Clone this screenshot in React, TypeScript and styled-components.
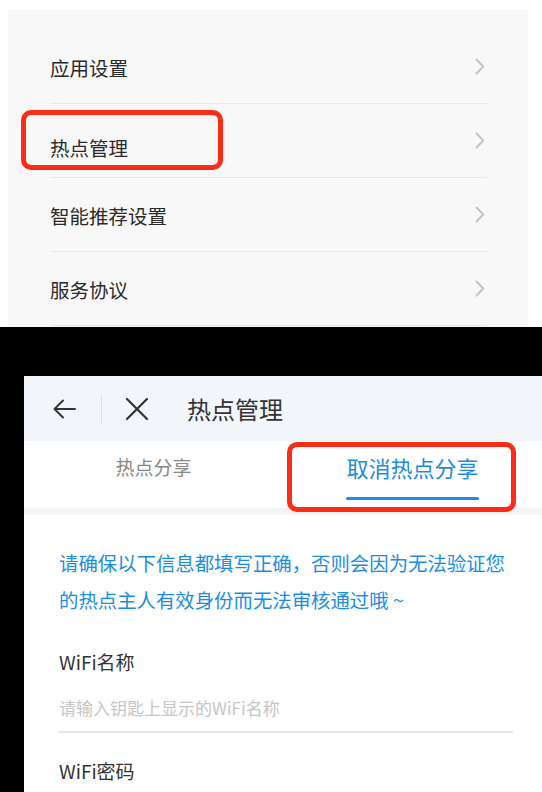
import React from 'react';
import styled, { createGlobalStyle } from 'styled-components';

const GlobalStyle = createGlobalStyle`
  html, body { margin: 0; padding: 0; background: #fff; }
  body { font-family: "Noto Sans CJK SC", "Noto Sans", sans-serif; }
`;

const Page = styled.div`
  width: 542px;
  height: 792px;
  display: flex;
  flex-direction: column;
  overflow: hidden;
  background: #fff;
`;

const TopArea = styled.div`
  flex: none;
  padding: 10px 14px 0 8px;
  background: #fff;
`;

const SettingsPanel = styled.div`
  background: #f8f8f8;
  padding-top: 20px;
  height: 317px;
  box-sizing: border-box;
`;

const Row = styled.div`
  position: relative;
  height: 73px;
  margin: 0 41px 0 42px;
  border-bottom: 1px solid #e8e8e8;
  display: flex;
  align-items: center;
  justify-content: space-between;
`;

const RowLabel = styled.span<{ $offset?: number }>`
  font-size: 19.5px;
  line-height: 28px;
  color: #2a2a2a;
  transform: translateY(${p => p.$offset ?? 1}px);
`;

const Chevron = styled.svg`
  width: 10px;
  height: 17px;
  margin-right: 2px;
  flex: none;
`;

const Highlight = styled.div<{ $l: number; $t: number; $w: number; $h: number }>`
  position: absolute;
  left: ${p => p.$l}px;
  top: ${p => p.$t}px;
  width: ${p => p.$w}px;
  height: ${p => p.$h}px;
  box-sizing: border-box;
  border: 5px solid #fd2c16;
  border-radius: 10px;
  pointer-events: none;
`;

const BlackArea = styled.div`
  flex: 1;
  background: #000;
  padding: 49px 0 0 24px;
  display: flex;
  flex-direction: column;
`;

const Phone = styled.div`
  flex: 1;
  background: #fff;
  display: flex;
  flex-direction: column;
`;

const Header = styled.div`
  height: 65px;
  flex: none;
  background: #f2f6fa;
  display: flex;
  align-items: center;
  padding-left: 28px;
`;

const IconButton = styled.span<{ $ml?: number }>`
  display: flex;
  align-items: center;
  margin-left: ${p => p.$ml ?? 0}px;
`;

const VSep = styled.span`
  width: 1px;
  height: 30px;
  background: #dcdfe3;
  margin-left: 25px;
`;

const Title = styled.span`
  margin-left: 37px;
  font-size: 24px;
  color: #333;
  line-height: 32px;
`;

const Tabs = styled.div`
  height: 67px;
  flex: none;
  display: grid;
  grid-template-columns: 1fr 1fr;
  background: #fff;
`;

const Tab = styled.div<{ $active?: boolean }>`
  position: relative;
  display: flex;
  justify-content: center;
  padding-top: ${p => (p.$active ? 11 : 12)}px;
`;

const TabInner = styled.div`
  display: flex;
  flex-direction: column;
  align-items: stretch;
`;

const TabText = styled.span<{ $active?: boolean }>`
  font-size: ${p => (p.$active ? 22 : 19)}px;
  line-height: ${p => (p.$active ? 30 : 28)}px;
  color: ${p => (p.$active ? '#1d8ce2' : '#888')};
`;

const Underline = styled.span`
  height: 3px;
  margin-top: 15px;
  background: #1d8ce2;
  border-radius: 2px;
`;

const Band = styled.div`
  height: 7px;
  flex: none;
  background: #f4f4f4;
`;

const Content = styled.div`
  padding: 0 29px 0 35px;
  display: flex;
  flex-direction: column;
`;

const Notice = styled.p`
  margin: 29px 0 0;
  max-width: 456px;
  font-size: 19.4px;
  line-height: 37px;
  color: #1a8de3;
`;

const FieldLabel = styled.div<{ $mt: number }>`
  margin-top: ${p => p.$mt}px;
  font-size: 19px;
  line-height: 28px;
  color: #333;
`;

const FieldInput = styled.input`
  margin-top: 18px;
  padding: 0 0 11px;
  border: none;
  border-bottom: 2px solid #e6e6e6;
  outline: none;
  background: transparent;
  font-family: "Noto Sans CJK SC", "Noto Sans", sans-serif;
  font-size: 17px;
  line-height: 26px;
  height: 39px;
  box-sizing: border-box;
  color: #333;
  &::placeholder { color: #c6c6c6; }
`;

const settings = ['应用设置', '热点管理', '智能推荐设置', '服务协议'];

const ChevronIcon = () => (
  <Chevron viewBox="0 0 10 17">
    <path d="M1.5 1.5 L8.3 8.5 L1.5 15.5" fill="none" stroke="#c2c2c2" strokeWidth="1.8" strokeLinecap="round" strokeLinejoin="round" />
  </Chevron>
);

export default function App() {
  return (
    <Page>
      <GlobalStyle />
      <TopArea>
        <SettingsPanel>
          {settings.map((s, i) => (
            <Row key={s}>
              <RowLabel $offset={i === 1 ? 7 : 1}>{s}</RowLabel>
              <ChevronIcon />
              {i === 1 && <Highlight $l={-29} $t={6} $w={202} $h={60} />}
            </Row>
          ))}
        </SettingsPanel>
      </TopArea>
      <BlackArea>
        <Phone>
          <Header>
            <IconButton>
              <svg width="24" height="22" viewBox="0 0 24 22">
                <path d="M23 11H2.5 M11 2.5 L2.5 11 L11 19.5" fill="none" stroke="#333" strokeWidth="2" strokeLinecap="round" strokeLinejoin="round" />
              </svg>
            </IconButton>
            <VSep />
            <IconButton $ml={22}>
              <svg width="26" height="26" viewBox="0 0 26 26">
                <path d="M3 3 L23 23 M23 3 L3 23" fill="none" stroke="#333" strokeWidth="2.2" strokeLinecap="round" />
              </svg>
            </IconButton>
            <Title>热点管理</Title>
          </Header>
          <Tabs>
            <Tab>
              <TabInner>
                <TabText>热点分享</TabText>
              </TabInner>
            </Tab>
            <Tab $active>
              <TabInner>
                <TabText $active>取消热点分享</TabText>
                <Underline />
              </TabInner>
              <Highlight $l={4} $t={1} $w={229} $h={70} />
            </Tab>
          </Tabs>
          <Band />
          <Content>
            <Notice>请确保以下信息都填写正确，否则会因为无法验证您的热点主人有效身份而无法审核通过哦 ~</Notice>
            <FieldLabel $mt={30}>WiFi名称</FieldLabel>
            <FieldInput placeholder="请输入钥匙上显示的WiFi名称" readOnly />
            <FieldLabel $mt={24}>WiFi密码</FieldLabel>
          </Content>
        </Phone>
      </BlackArea>
    </Page>
  );
}
